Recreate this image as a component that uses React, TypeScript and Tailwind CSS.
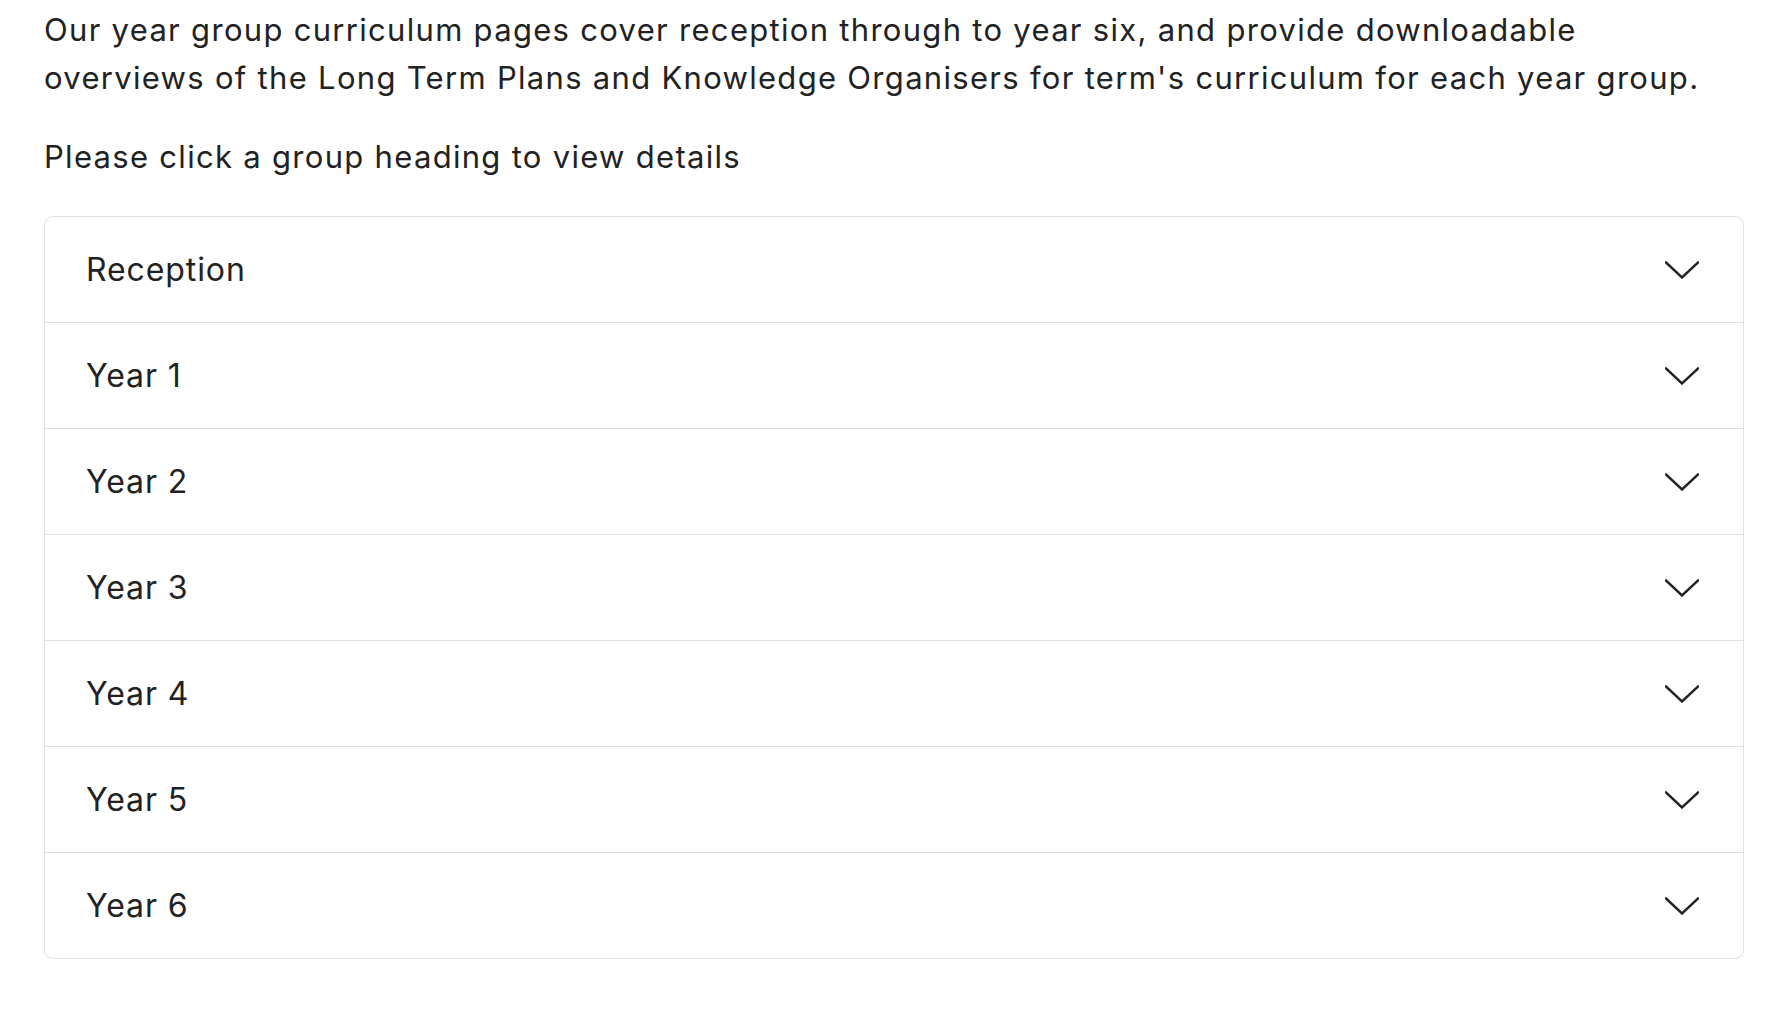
import { useState } from "react";

const groups = ["Reception", "Year 1", "Year 2", "Year 3", "Year 4", "Year 5", "Year 6"];

function Chevron() {
  return (
    <svg width="34" height="18" viewBox="0 0 34 18" fill="none" className="shrink-0">
      <polyline
        points="1,1.5 17,16.5 33,1.5"
        stroke="#222222"
        strokeWidth="2.4"
        strokeLinecap="square"
        strokeLinejoin="miter"
      />
    </svg>
  );
}

export default function App() {
  const [open, setOpen] = useState<number | null>(null);

  return (
    <div className="min-h-screen bg-white font-['Inter',sans-serif] text-[#222222]">
      <div className="w-[1700px] ml-[44px] pt-[6px]">
        <p className="text-[31px] leading-[48px] tracking-[1.3px]">
          Our year group curriculum pages cover reception through to year six, and provide downloadable{" "}
          <br />
          overviews of the Long Term Plans and Knowledge Organisers for term's curriculum for each year group.
        </p>
        <p className="text-[31px] leading-[48px] mt-[31px] tracking-[1.3px]">
          Please click a group heading to view details
        </p>

        <div className="mt-[35px] border border-[#dee2e6] rounded-[9px] overflow-hidden">
          {groups.map((g, i) => (
            <div key={g} className={i > 0 ? "border-t border-[#dee2e6]" : ""}>
              <button
                onClick={() => setOpen(open === i ? null : i)}
                className="w-full h-[105px] flex items-center justify-between pl-[41px] pr-[44px] text-left text-[32px] tracking-[0.9px] text-[#222222]"
              >
                <span>{g}</span>
                <Chevron />
              </button>
              {open === i && (
                <div className="px-[41px] pb-[30px] text-[24px] text-[#495057]">
                  Long Term Plans and Knowledge Organisers for {g}.
                </div>
              )}
            </div>
          ))}
        </div>
      </div>
    </div>
  );
}
